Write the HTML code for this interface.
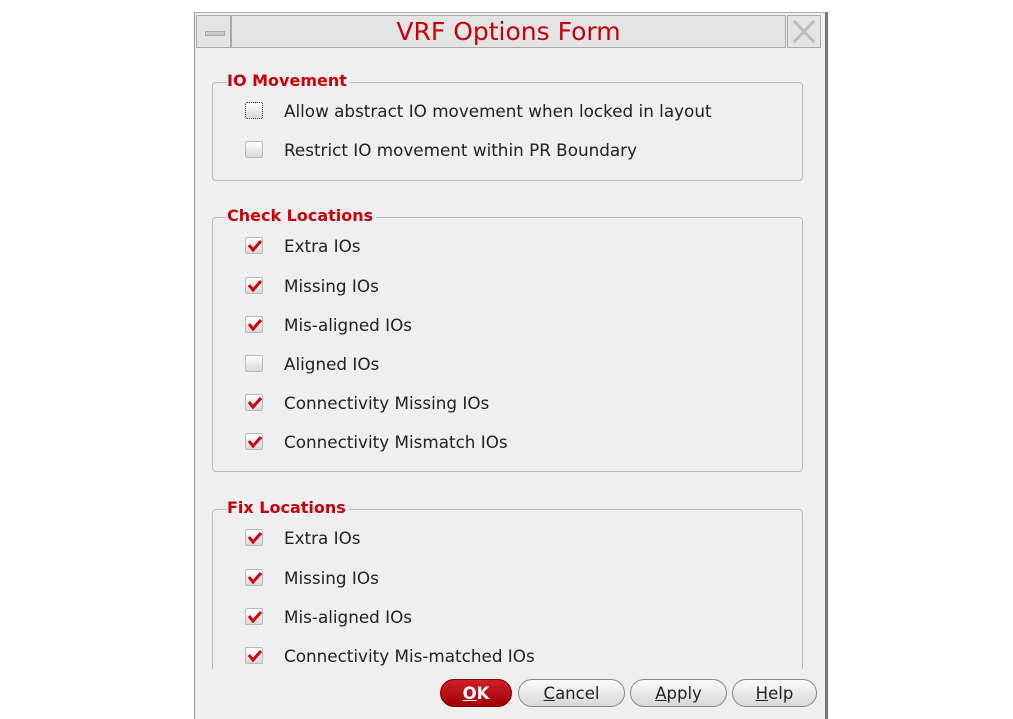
<!DOCTYPE html>
<html><head><style>
body{margin:0;width:1013px;height:718px;background:#fff;position:relative;overflow:hidden;font-family:"DejaVu Sans","Liberation Sans",sans-serif;}
.win{position:absolute;left:194px;top:12px;width:630px;height:706px;background:#efefef;border-left:1px solid #999;border-top:1px solid #aaa;border-right:3px solid #777;}
.tb{position:absolute;top:2px;height:33px;background:#e4e4e4;border:1px solid #aaa;box-sizing:border-box;}
.title{color:#c8000a;font-size:25px;text-align:center;line-height:31px;}
.grp{position:absolute;left:17px;width:591px;border:1px solid #bbb;border-radius:4px;box-sizing:border-box;}
.lg{position:absolute;left:13px;top:-11px;background:#efefef;padding:0 3px 0 1px;color:#c8000a;font-weight:bold;font-size:16px;line-height:18px;}
.row{position:absolute;left:32px;height:20px;font-size:16.8px;color:#222;line-height:20px;}
.cb{position:absolute;left:0;top:1px;width:18px;height:17px;background:linear-gradient(#fff,#d8d8d8);border:1px solid #bbb;border-radius:2px;box-sizing:border-box;}
.cb.d{border:1px dotted #333;}
.cb svg{position:absolute;left:1px;top:1px}
.row span{position:absolute;left:39px;white-space:nowrap}
.clip{position:absolute;left:0;top:0;width:630px;height:656px;overflow:hidden}
.btn{position:absolute;top:666px;height:28px;border:1px solid #888;border-radius:14px;background:linear-gradient(#fafafa,#d8d8d8);font-size:16.5px;text-align:center;line-height:27px;color:#222;box-sizing:border-box;}
</style></head><body>
<div class="win">
<div class="tb" style="left:1px;width:35px"><div style="position:absolute;left:8px;top:15px;width:18px;height:3px;background:#ccc;border:1px solid #aaa"></div></div>
<div class="tb title" style="left:36px;width:555px">VRF Options Form</div>
<div class="tb" style="left:592px;width:34px"><svg width="32" height="31" viewBox="0 0 32 31"><path d="M6 5L26 26M26 5L6 26" stroke="#bbb" stroke-width="3"/></svg></div>
<div class="clip">
<div class="grp" style="top:69px;height:99px"><div class="lg">IO Movement</div>
<div class="row" style="top:18px"><div class="cb d"></div><span>Allow abstract IO movement when locked in layout</span></div>
<div class="row" style="top:57px"><div class="cb"></div><span>Restrict IO movement within PR Boundary</span></div>
</div>
<div class="grp" style="top:204px;height:255px"><div class="lg">Check Locations</div>
<div class="row" style="top:18px"><div class="cb"><svg width="15" height="14"><path d="M2 6L6 11L14 2" stroke="#d00010" stroke-width="3" fill="none"/></svg></div><span>Extra IOs</span></div>
<div class="row" style="top:58px"><div class="cb"><svg width="15" height="14"><path d="M2 6L6 11L14 2" stroke="#d00010" stroke-width="3" fill="none"/></svg></div><span>Missing IOs</span></div>
<div class="row" style="top:97px"><div class="cb"><svg width="15" height="14"><path d="M2 6L6 11L14 2" stroke="#d00010" stroke-width="3" fill="none"/></svg></div><span>Mis-aligned IOs</span></div>
<div class="row" style="top:136px"><div class="cb"></div><span>Aligned IOs</span></div>
<div class="row" style="top:175px"><div class="cb"><svg width="15" height="14"><path d="M2 6L6 11L14 2" stroke="#d00010" stroke-width="3" fill="none"/></svg></div><span>Connectivity Missing IOs</span></div>
<div class="row" style="top:214px"><div class="cb"><svg width="15" height="14"><path d="M2 6L6 11L14 2" stroke="#d00010" stroke-width="3" fill="none"/></svg></div><span>Connectivity Mismatch IOs</span></div>
</div>
<div class="grp" style="top:496px;height:200px"><div class="lg">Fix Locations</div>
<div class="row" style="top:18px"><div class="cb"><svg width="15" height="14"><path d="M2 6L6 11L14 2" stroke="#d00010" stroke-width="3" fill="none"/></svg></div><span>Extra IOs</span></div>
<div class="row" style="top:58px"><div class="cb"><svg width="15" height="14"><path d="M2 6L6 11L14 2" stroke="#d00010" stroke-width="3" fill="none"/></svg></div><span>Missing IOs</span></div>
<div class="row" style="top:97px"><div class="cb"><svg width="15" height="14"><path d="M2 6L6 11L14 2" stroke="#d00010" stroke-width="3" fill="none"/></svg></div><span>Mis-aligned IOs</span></div>
<div class="row" style="top:136px"><div class="cb"><svg width="15" height="14"><path d="M2 6L6 11L14 2" stroke="#d00010" stroke-width="3" fill="none"/></svg></div><span>Connectivity Mis-matched IOs</span></div>
</div>
</div>
<div class="btn" style="left:245px;width:72px;background:linear-gradient(#d0202a,#a00008);color:#fff;font-weight:bold;border-color:#800"><u>O</u>K</div>
<div class="btn" style="left:323px;width:107px"><u>C</u>ancel</div>
<div class="btn" style="left:435px;width:97px"><u>A</u>pply</div>
<div class="btn" style="left:537px;width:85px"><u>H</u>elp</div>
</div>
</body></html>
